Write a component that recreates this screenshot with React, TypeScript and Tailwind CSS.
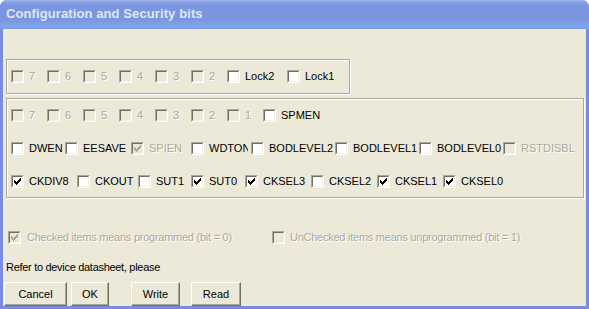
import React from 'react';

type Item = { label: string; w: number; checked?: boolean; disabled?: boolean; clip?: number };

function CheckMark({ gray }: { gray?: boolean }) {
  const fill = gray ? '#aca899' : '#000';
  return (
    <svg width="9" height="9" viewBox="0 0 9 9" shapeRendering="crispEdges" className="absolute left-0 top-0">
      <g fill={fill} transform="translate(1 1)">
        <rect x="6" y="0" width="1" height="1" />
        <rect x="5" y="1" width="2" height="1" />
        <rect x="0" y="2" width="1" height="1" />
        <rect x="4" y="2" width="3" height="1" />
        <rect x="0" y="3" width="2" height="1" />
        <rect x="3" y="3" width="3" height="1" />
        <rect x="0" y="4" width="5" height="1" />
        <rect x="1" y="5" width="3" height="1" />
        <rect x="2" y="6" width="1" height="1" />
      </g>
    </svg>
  );
}

function Box({ checked, disabled }: { checked?: boolean; disabled?: boolean }) {
  return (
    <span className="block w-[13px] h-[13px] shrink-0 border border-t-[#aca899] border-l-[#aca899] border-r-white border-b-white">
      <span
        className={
          disabled
            ? 'relative block w-[11px] h-[11px] border border-t-[#716f64] border-l-[#716f64] border-r-[#f1efe2] border-b-[#f1efe2] bg-[#ece9d8]'
            : 'relative block w-[11px] h-[11px] border border-t-[#716f64] border-l-[#716f64] border-r-[#f1efe2] border-b-[#f1efe2] bg-white'
        }
      >
        {checked && <CheckMark gray={disabled} />}
      </span>
    </span>
  );
}

function Check({ item }: { item: Item }) {
  return (
    <div className="flex items-center gap-[5px] h-[13px] shrink-0 overflow-hidden" style={{ width: item.w }}>
      <Box checked={item.checked} disabled={item.disabled} />
      <span
        className={
          item.disabled
            ? 'whitespace-nowrap leading-[13px] text-[#aca899] [text-shadow:1px_1px_0_#fff] overflow-hidden'
            : 'whitespace-nowrap leading-[13px] text-black overflow-hidden'
        }
        style={item.clip ? { width: item.clip } : undefined}
      >
        {item.label}
      </span>
    </div>
  );
}

const bits = (from: number, to: number): Item[] => {
  const out: Item[] = [];
  for (let i = from; i >= to; i--) out.push({ label: String(i), w: 36, disabled: true });
  return out;
};

const lockRow: Item[] = [...bits(7, 2), { label: 'Lock2', w: 60 }, { label: 'Lock1', w: 56 }];
const extRow: Item[] = [...bits(7, 1), { label: 'SPMEN', w: 80 }];
const highRow: Item[] = [
  { label: 'DWEN', w: 54 },
  { label: 'EESAVE', w: 66 },
  { label: 'SPIEN', w: 60, checked: true, disabled: true },
  { label: 'WDTON', w: 60, clip: 39 },
  { label: 'BODLEVEL2', w: 84 },
  { label: 'BODLEVEL1', w: 84 },
  { label: 'BODLEVEL0', w: 84 },
  { label: 'RSTDISBL', w: 76, disabled: true },
];
const lowRow: Item[] = [
  { label: 'CKDIV8', w: 66, checked: true },
  { label: 'CKOUT', w: 61 },
  { label: 'SUT1', w: 53 },
  { label: 'SUT0', w: 54, checked: true },
  { label: 'CKSEL3', w: 66, checked: true },
  { label: 'CKSEL2', w: 66 },
  { label: 'CKSEL1', w: 66, checked: true },
  { label: 'CKSEL0', w: 60, checked: true },
];

function Row({ items }: { items: Item[] }) {
  return (
    <div className="flex">
      {items.map((it) => (
        <Check key={it.label} item={it} />
      ))}
    </div>
  );
}

function Button({ label, w, ml }: { label: string; w: string; ml: string }) {
  return (
    <button
      className={`${w} ${ml} h-[24px] bg-[#ece9d8] border border-t-white border-l-white border-r-[#716f64] border-b-[#716f64] shadow-[inset_-1px_-1px_0_#aca899] text-black text-[11px] leading-none`}
    >
      {label}
    </button>
  );
}

export default function App() {
  return (
    <div className="w-[589px] h-[309px] bg-white font-['Liberation_Sans',Arial,sans-serif] text-[11px] overflow-hidden">
      <div className="w-[589px] h-[309px] flex flex-col rounded-t-[7px] overflow-hidden bg-[#7a8ce0]">
        <div className="h-[29px] shrink-0 flex items-center pl-[6px] pb-[1px] bg-[linear-gradient(to_bottom,#a6baf0_0px,#8aa3e6_2px,#7b96df_5px,#7b96df_20px,#80a5ea_26px,#7a9be4_29px)]">
          <span className="text-[13px] font-bold text-[#dde6f8] tracking-[0.1px]">Configuration and Security bits</span>
        </div>
        <div className="flex-1 flex mx-[3px] mb-[3px] bg-[#ece9d8]">
          <div className="flex flex-col w-full">
            <div className="ml-[3px] mt-[30px] w-[344px] h-[35px] border border-[#aca899] shadow-[inset_1px_1px_0_#fff,1px_1px_0_#fff] pl-[4px] pt-[10px]">
              <Row items={lockRow} />
            </div>
            <div className="ml-[3px] mt-[4px] w-[578px] h-[100px] border border-[#aca899] shadow-[inset_1px_1px_0_#fff,1px_1px_0_#fff] pl-[4px] pt-[10px] flex flex-col gap-[20px]">
              <Row items={extRow} />
              <Row items={highRow} />
              <Row items={lowRow} />
            </div>
            <div className="flex mt-[33px] ml-[5px] h-[13px]">
              <div className="flex items-center gap-[6px] w-[264px]">
                <Box checked disabled />
                <span className="whitespace-nowrap tracking-[-0.25px] text-[#aca899] [text-shadow:1px_1px_0_#fff]">
                  Checked items means programmed (bit = 0)
                </span>
              </div>
              <div className="flex items-center gap-[5px]">
                <Box disabled />
                <span className="whitespace-nowrap tracking-[-0.25px] text-[#aca899] [text-shadow:1px_1px_0_#fff]">
                  UnChecked items means unprogrammed (bit = 1)
                </span>
              </div>
            </div>
            <div className="mt-[17px] ml-[3px] leading-[13px] tracking-[-0.3px] text-black">Refer to device datasheet, please</div>
            <div className="flex mt-[8px]">
              <Button label="Cancel" w="w-[63px]" ml="ml-[1px]" />
              <Button label="OK" w="w-[38px]" ml="ml-[4px]" />
              <Button label="Write" w="w-[49px]" ml="ml-[22px]" />
              <Button label="Read" w="w-[50px]" ml="ml-[11px]" />
            </div>
          </div>
        </div>
      </div>
    </div>
  );
}
